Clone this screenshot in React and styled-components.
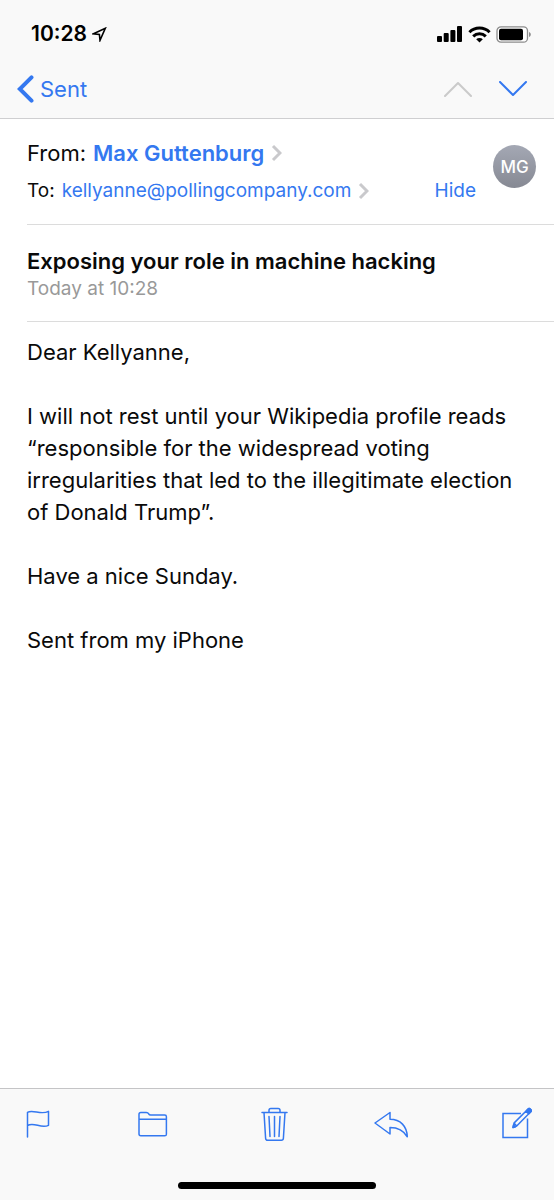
import React from "react";
import styled, { createGlobalStyle } from "styled-components";

const GlobalStyle = createGlobalStyle`
  * {
    box-sizing: border-box;
  }
  body {
    margin: 0;
    background: #ffffff;
    color: #0a0a0a;
    font-family: Inter, "Liberation Sans", sans-serif;
  }
`;

const blue = "#3478f0";

const Screen = styled.div`
  display: flex;
  flex-direction: column;
  min-height: 100vh;
`;

const Header = styled.header`
  background: #f9f9f9;
  border-bottom: 1px solid #cfcfd1;
`;

const StatusBar = styled.div`
  display: flex;
  align-items: center;
  justify-content: space-between;
  height: 60px;
  padding: 8px 22px 0 31px;
`;

const Time = styled.div`
  display: flex;
  align-items: center;
  gap: 5px;
  font-size: 21px;
  font-weight: 600;
  line-height: 24px;
  color: #000000;
`;

const Signals = styled.div`
  display: flex;
  align-items: center;
  gap: 5px;
`;

const NavBar = styled.nav`
  display: flex;
  align-items: center;
  justify-content: space-between;
  height: 58px;
  padding: 0 27px 0 17px;
`;

const BackLink = styled.a`
  display: flex;
  align-items: center;
  gap: 6px;
  font-size: 22px;
  line-height: 28px;
  color: ${blue};
  text-decoration: none;
`;

const Arrows = styled.div`
  display: flex;
  gap: 27px;
`;

const IconButton = styled.button`
  display: flex;
  padding: 0;
  border: none;
  background: none;
  color: ${(props) => (props.disabled ? "#cacaca" : blue)};
  cursor: pointer;
`;

const Main = styled.main`
  flex: 1;
  padding-left: 27px;
`;

const Envelope = styled.section`
  display: flex;
  justify-content: space-between;
  padding: 20px 18px 19px 0;
  border-bottom: 1px solid #dcdcdc;
`;

const People = styled.div`
  display: flex;
  flex: 1;
  flex-direction: column;
  gap: 10px;
`;

const Person = styled.div`
  display: flex;
  align-items: center;
  gap: 7px;
  font-size: ${(props) => (props.$small ? "19px" : "22px")};
  line-height: 28px;
`;

const Address = styled.a`
  display: flex;
  align-items: center;
  gap: 7px;
  color: ${blue};
  font-weight: ${(props) => (props.$strong ? 600 : 400)};
  text-decoration: none;
`;

const HideButton = styled.button`
  margin-left: auto;
  padding: 0 17px 0 0;
  border: none;
  background: none;
  color: ${blue};
  font: inherit;
  cursor: pointer;
`;

const Avatar = styled.div`
  display: flex;
  align-items: center;
  justify-content: center;
  width: 43px;
  height: 43px;
  margin-top: 6px;
  border-radius: 50%;
  background: linear-gradient(#a4a8b4, #868993);
  color: #ffffff;
  font-size: 17px;
  font-weight: 500;
`;

const Subject = styled.section`
  padding: 22px 17px 19px 0;
  border-bottom: 1px solid #dcdcdc;
`;

const Title = styled.h1`
  margin: 0;
  font-size: 22px;
  font-weight: 600;
  line-height: 28px;
`;

const Sent = styled.time`
  display: block;
  font-size: 19px;
  line-height: 27px;
  color: #999999;
`;

const Message = styled.article`
  padding: 14px 27px 32px 0;
  font-size: 22px;
  line-height: 32px;

  p {
    margin: 0 0 32px;
  }
`;

const Footer = styled.footer`
  background: #f9f9f9;
  border-top: 1px solid #c4c4c6;
`;

const Toolbar = styled.div`
  display: flex;
  justify-content: space-between;
  padding: 17px 22px 0 26px;
`;

const HomeBar = styled.div`
  width: 198px;
  height: 7px;
  margin: 40px auto 11px;
  border-radius: 4px;
  background: #000000;
`;

const Drawing = ({ width, height, weight = 1.5, children }) => (
  <svg
    width={width}
    height={height}
    viewBox={`0 0 ${width} ${height}`}
    fill="none"
    stroke="currentColor"
    strokeWidth={weight}
    strokeLinejoin="round"
    strokeLinecap="round"
    aria-hidden="true"
  >
    {children}
  </svg>
);

const Disclosure = () => (
  <Drawing width={11} height={18} weight={3}>
    <path d="M2 2l7 7-7 7" stroke="#c9c9cc" strokeLinecap="butt" strokeLinejoin="miter" />
  </Drawing>
);

const App = () => {
  return (
    <Screen>
      <GlobalStyle />
      <Header>
        <StatusBar>
          <Time>
            10:28
            <Drawing width={15} height={15} weight={1.6}>
              <path d="M1.5 6.8L13.3 1.3 8 13.3 7.4 7.4z" strokeLinejoin="miter" />
            </Drawing>
          </Time>
          <Signals>
            <svg width="26" height="16" viewBox="0 0 26 16" aria-label="Signal">
              <rect x="0" y="10" width="5" height="6" rx="1" />
              <rect x="6.7" y="7" width="5" height="9" rx="1" />
              <rect x="13.4" y="4" width="5" height="12" rx="1" />
              <rect x="20" y="0" width="5" height="16" rx="1" />
            </svg>
            <svg width="23" height="17" viewBox="0 0 23 17" aria-label="Wi-Fi">
              <g fill="none" stroke="#000" strokeWidth="3">
                <path d="M1.4 6.3a14.3 14.3 0 0 1 20.2 0" />
                <path d="M5.2 10.4a9 9 0 0 1 12.6 0" />
              </g>
              <path d="M8.2 13.3a4.7 4.7 0 0 1 6.6 0L11.5 16.6z" />
            </svg>
            <svg width="36" height="17" viewBox="0 0 36 17" aria-label="Battery">
              <rect x="1" y="0.8" width="30.5" height="15.4" rx="4" fill="#fff" stroke="#8c8c8c" strokeWidth="1.3" />
              <rect x="3" y="2.8" width="24" height="11.4" rx="2" />
              <path d="M33 6v5c2.4-.8 2.4-4.2 0-5z" fill="#8c8c8c" />
            </svg>
          </Signals>
        </StatusBar>
        <NavBar>
          <BackLink href="#sent">
            <Drawing width={17} height={28} weight={4}>
              <path d="M14.5 2.3L2.8 14l11.7 11.7" strokeLinejoin="miter" />
            </Drawing>
            Sent
          </BackLink>
          <Arrows>
            <IconButton type="button" aria-label="Previous message" disabled>
              <Drawing width={28} height={16} weight={2}>
                <path d="M1 15L14 2l13 13" />
              </Drawing>
            </IconButton>
            <IconButton type="button" aria-label="Next message">
              <Drawing width={28} height={16} weight={2}>
                <path d="M1 1l13 13L27 1" />
              </Drawing>
            </IconButton>
          </Arrows>
        </NavBar>
      </Header>

      <Main>
        <Envelope>
          <People>
            <Person>
              <span>From:</span>
              <Address href="#max" $strong>
                Max Guttenburg
                <Disclosure />
              </Address>
            </Person>
            <Person $small>
              <span>To:</span>
              <Address href="mailto:kellyanne@pollingcompany.com">
                kellyanne@pollingcompany.com
                <Disclosure />
              </Address>
              <HideButton type="button">Hide</HideButton>
            </Person>
          </People>
          <Avatar>MG</Avatar>
        </Envelope>

        <Subject>
          <Title>Exposing your role in machine hacking</Title>
          <Sent>Today at 10:28</Sent>
        </Subject>

        <Message>
          <p>Dear Kellyanne,</p>
          <p>
            I will not rest until your Wikipedia profile reads “responsible for
            the widespread voting irregularities that led to the illegitimate
            election of Donald Trump”.
          </p>
          <p>Have a nice Sunday.</p>
          <p>Sent from my iPhone</p>
        </Message>
      </Main>

      <Footer>
        <Toolbar>
          <IconButton type="button" aria-label="Flag">
            <Drawing width={26} height={36}>
              <path d="M1.5 31V6.3C7 3 15 9.5 22.5 5.3v14C15 23 8 15.5 1.5 19.5" />
            </Drawing>
          </IconButton>
          <IconButton type="button" aria-label="Move to folder">
            <Drawing width={30} height={36}>
              <path d="M1 13.3h27.3M1 8.3c0-1.2.6-1.8 1.8-1.8h5.5c1.8 0 2 .6 2.4 1.4.4.9.8 1.2 2 1.2h14c1.1 0 1.7.6 1.7 1.7v17.4c0 1-.6 1.6-1.7 1.6H2.8c-1.2 0-1.8-.6-1.8-1.7z" />
            </Drawing>
          </IconButton>
          <IconButton type="button" aria-label="Delete">
            <Drawing width={33} height={36}>
              <path d="M7 6.5h25M9 6.5l1.6 25.7c.1 1.4.8 2.1 2 2.1h13.8c1.2 0 1.9-.7 2-2.1L30 6.5M14 6.5V4.3c0-1.1.7-1.8 1.8-1.8h7.4c1.1 0 1.8.7 1.8 1.8v2.2M14 10.5l1 20M19.5 10.5v20M25 10.5l-1 20" />
            </Drawing>
          </IconButton>
          <IconButton type="button" aria-label="Reply">
            <Drawing width={41} height={36}>
              <path d="M1 17L16 6.5v6.8c10.5 0 17 7 17.3 17.5-3.5-6-8.5-9.3-17.3-9.3v6.5z" />
            </Drawing>
          </IconButton>
          <IconButton type="button" aria-label="Compose">
            <Drawing width={31} height={36}>
              <path d="M20 7.5H2v24h24.5V12.5" strokeLinejoin="miter" strokeLinecap="butt" />
              <path d="M12 21.5l1-4.4L27.3 2.8c.6-.6 1.1-.6 1.7 0l1 1c.6.6.6 1.1 0 1.7L15.7 20zM25 5.2l2.7 2.7M13 17.1l2.7 2.9" />
              <path d="M25.4 4.8l2-2h1.5l1.2 1.2v1.4l-2 2zM12 21.5l.6-2.5 1.9 1.8z" fill="currentColor" />
            </Drawing>
          </IconButton>
        </Toolbar>
        <HomeBar />
      </Footer>
    </Screen>
  );
};

export default App;
